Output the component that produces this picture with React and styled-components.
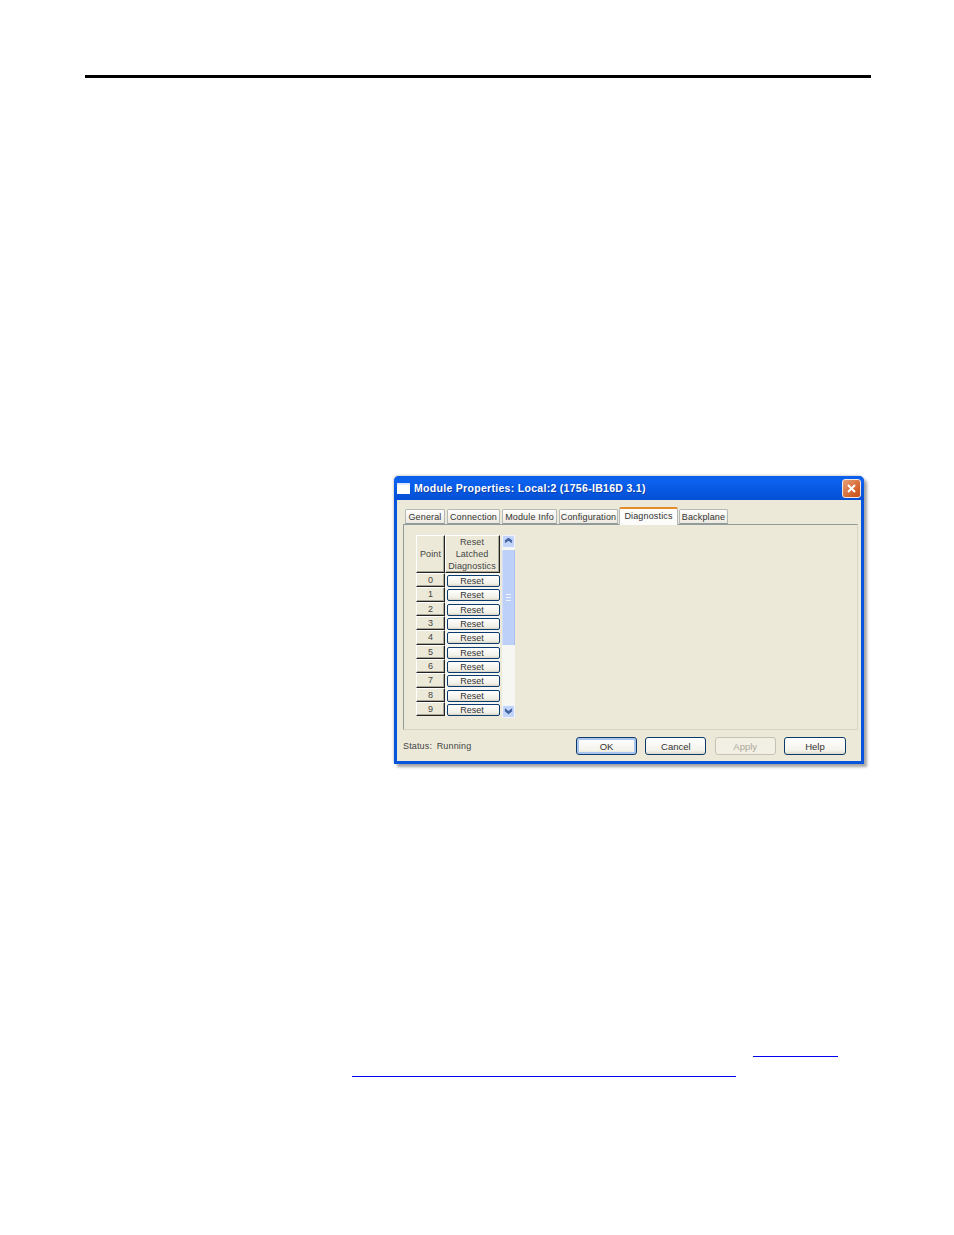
import React from "react";
import styled, { createGlobalStyle } from "styled-components";

const Global = createGlobalStyle`
  html, body { margin: 0; padding: 0; background: #fff; }
  body { font-family: "Liberation Sans", Arial, sans-serif; }
`;

const Page = styled.div`
  width: 954px;
  height: 1235px;
  box-sizing: border-box;
  padding-top: 75px;
  overflow: hidden;
`;

const TopRule = styled.div`
  height: 3px;
  margin: 0 83px 0 85px;
  background: #000;
`;

const Dialog = styled.div`
  width: 470px;
  height: 288px;
  margin: 398px 0 0 394px;
  box-sizing: border-box;
  display: flex;
  flex-direction: column;
  border-radius: 5px 5px 0 0;
  background: #0855dd;
  box-shadow: 3px 3px 3px rgba(90, 90, 90, 0.55), -1px -1px 2px rgba(150, 150, 150, 0.4);
  padding: 0 3px 3px;
`;

const TitleBar = styled.div`
  height: 24px;
  flex: none;
  display: flex;
  align-items: center;
  margin: 0 -3px;
  padding-left: 3px;
  padding-right: 3px;
  border-radius: 5px 5px 0 0;
  background: linear-gradient(#0a5fe8 0%, #0b62ef 20%, #0757e0 60%, #0450d6 100%);
`;

const TitleIcon = styled.div`
  width: 13px;
  height: 9px;
  background: #fff;
  border-top: 2px solid #dfe8ff;
  margin-right: 4px;
`;

const TitleText = styled.div`
  flex: 1;
  color: #fff;
  font: bold 10.5px "Liberation Sans", sans-serif;
  letter-spacing: 0.3px;
  text-shadow: 1px 1px 0 #0a3fa8;
  white-space: nowrap;
`;

const CloseButton = styled.div`
  width: 17px;
  height: 17px;
  border: 1px solid #f4e6df;
  border-radius: 3px;
  background: linear-gradient(135deg, #e8a078, #d2622c 70%, #c4521f);
  display: flex;
  align-items: center;
  justify-content: center;
`;

const Body = styled.div`
  flex: 1;
  min-height: 0;
  display: flex;
  flex-direction: column;
  background: #ece9d8;
  padding: 7px 3px 0 6px;
`;

const Tabs = styled.div`
  display: flex;
  align-items: flex-end;
  height: 17px;
  padding-left: 2px;
  position: relative;
  z-index: 1;
`;

const Tab = styled.div`
  height: ${(p) => (p.$active ? "18px" : "15px")};
  width: ${(p) => p.$width}px;
  box-sizing: border-box;
  margin-left: ${(p) => (p.$active ? "-1px" : "0")};
  margin-right: ${(p) => (p.$active ? 1 : 2)}px;
  margin-bottom: ${(p) => (p.$active ? "-1px" : "0")};
  padding-bottom: ${(p) => (p.$active ? "2px" : "0")};
  display: flex;
  align-items: center;
  justify-content: center;
  color: #333;
  font-size: 9px;
  letter-spacing: 0.15px;
  white-space: nowrap;
  background: ${(p) => (p.$active ? "#fcfcfa" : "linear-gradient(#fff, #ece9df)")};
  border: 1px solid #b4b9b6;
  border-bottom: ${(p) => (p.$active ? "none" : "1px solid #919b9c")};
  border-top: ${(p) => (p.$active ? "2px solid #e68b2c" : "1px solid #b4b9b6")};
  border-radius: 2px 2px 0 0;
`;

const Pane = styled.div`
  height: 206px;
  flex: none;
  box-sizing: border-box;
  border: 1px solid #d8d5c6;
  border-top: 1px solid #919b9c;
  border-left-color: #919b9c;
  padding: 10px 0 0 12px;
  display: flex;
  gap: 2px;
  align-items: flex-start;
`;

const Grid = styled.div`
  display: grid;
  grid-template-columns: 29px 55px;
  grid-template-rows: 38px repeat(10, 14.33px);
`;

const HeadCell = styled.div`
  box-sizing: border-box;
  display: flex;
  align-items: center;
  justify-content: center;
  text-align: center;
  background: #ece9d8;
  color: #444;
  font-size: 9px;
  line-height: 12px;
  letter-spacing: 0.1px;
  padding-right: ${(p) => p.$shift || 0}px;
  border-top: 1px solid #fff;
  border-left: 1px solid #fff;
  border-right: 1px solid #222;
  border-bottom: 1px solid #222;
  box-shadow: inset -1px -1px 0 #aca899;
`;

const PortCell = styled(HeadCell)`
  line-height: 10px;
`;

const ResetCell = styled.div`
  background: #f5f5f2;
  padding: 2px 0 0 2px;
  box-sizing: border-box;
`;

const ResetButton = styled.div`
  width: 53px;
  height: 12px;
  box-sizing: border-box;
  border: 1px solid #0a3a6e;
  border-radius: 2px;
  background: linear-gradient(#fff, #f0efe6 80%, #d6d2c2);
  color: #333;
  font-size: 9px;
  line-height: 10px;
  text-align: center;
  padding-right: 3px;
`;

const Scroll = styled.div`
  width: 13px;
  height: 183px;
  display: flex;
  flex-direction: column;
  background: #f6f6f2;
`;

const ScrollButton = styled.div`
  height: 13px;
  flex: none;
  box-sizing: border-box;
  border: 1px solid #eef3fd;
  border-radius: 2px;
  background: #c3d4fb;
  display: flex;
  align-items: center;
  justify-content: center;
`;

const Thumb = styled.div`
  height: 95px;
  margin-top: 2px;
  flex: none;
  background: #bcd0f8;
  display: flex;
  align-items: center;
  justify-content: center;
  border-left: 1px solid #d2dffc;
  border-right: 1px solid #a8c0f2;
  box-sizing: border-box;
`;

const Grip = styled.div`
  width: 5px;
  height: 7px;
  border-top: 1px solid #eef3fe;
  border-bottom: 1px solid #eef3fe;
  box-sizing: border-box;
  background: linear-gradient(transparent 40%, #eef3fe 40%, #eef3fe 60%, transparent 60%);
`;

const Track = styled.div`
  flex: 1;
`;

const Footer = styled.div`
  flex: 1;
  display: flex;
  align-items: center;
  padding: 0 12px 0 0;
`;

const Status = styled.div`
  flex: 1;
  color: #444;
  font-size: 9px;
  letter-spacing: 0.15px;
  padding-top: 1px;
  word-spacing: 2px;
`;

const Buttons = styled.div`
  display: flex;
  gap: 8.3px;
  margin-top: 1px;
`;

const Button = styled.div`
  width: ${(p) => p.$width || 61}px;
  height: 18px;
  box-sizing: border-box;
  display: flex;
  align-items: center;
  justify-content: center;
  font-size: 9.5px;
  border-radius: 3px;
  color: ${(p) => (p.$disabled ? "#aca899" : "#333")};
  border: 1px solid ${(p) => (p.$disabled ? "#c6c3b4" : "#0b3a6b")};
  background: ${(p) => (p.$disabled ? "#f2f0e5" : "linear-gradient(#fff, #f3f2ea 80%, #dcd8c8)")};
  box-shadow: ${(p) => (p.$default ? "inset 0 0 0 2px #a9c4ee" : "none")};
`;

const LinkLine = styled.div`
  height: 1px;
  background: #0000ee;
  width: ${(p) => p.$width}px;
  margin-left: ${(p) => p.$left}px;
  margin-top: ${(p) => p.$top}px;
`;

const Chevron = ({ up }) => (
  <svg width="9" height="8" viewBox="0 0 9 8">
    {[0, 3].map((o) => (
      <path
        key={o}
        d={up ? `M1 ${3 + o / 2}L4.5 ${0.5 + o / 2}L8 ${3 + o / 2}` : `M1 ${1 + o / 2}L4.5 ${4 + o / 2}L8 ${1 + o / 2}`}
        fill="none"
        stroke="#3a5a9a"
        strokeWidth="1.3"
      />
    ))}
  </svg>
);

const tabs = [
  ["General", 40],
  ["Connection", 53],
  ["Module Info", 55],
  ["Configuration", 59],
  ["Diagnostics", 59, true],
  ["Backplane", 49],
];

const App = () => (
  <Page>
    <Global />
    <TopRule />
    <Dialog>
      <TitleBar>
        <TitleIcon />
        <TitleText>Module Properties: Local:2 (1756-IB16D 3.1)</TitleText>
        <CloseButton>
          <svg width="11" height="11" viewBox="0 0 11 11">
            <path d="M2 2L9 9M9 2L2 9" stroke="#fff" strokeWidth="2" />
          </svg>
        </CloseButton>
      </TitleBar>
      <Body>
        <Tabs>
          {tabs.map(([label, width, active]) => (
            <Tab key={label} $width={width} $active={active}>
              {label}
            </Tab>
          ))}
        </Tabs>
        <Pane>
          <Grid>
            <HeadCell>Point</HeadCell>
            <HeadCell $shift={1}>
              Reset
              <br />
              Latched
              <br />
              Diagnostics
            </HeadCell>
            {[0, 1, 2, 3, 4, 5, 6, 7, 8, 9].map((n) => (
              <React.Fragment key={n}>
                <PortCell>{n}</PortCell>
                <ResetCell>
                  <ResetButton>Reset</ResetButton>
                </ResetCell>
              </React.Fragment>
            ))}
          </Grid>
          <Scroll>
            <ScrollButton>
              <Chevron up />
            </ScrollButton>
            <Thumb>
              <Grip />
            </Thumb>
            <Track />
            <ScrollButton>
              <Chevron />
            </ScrollButton>
          </Scroll>
        </Pane>
        <Footer>
          <Status>Status: Running</Status>
          <Buttons>
            <Button $default>OK</Button>
            <Button>Cancel</Button>
            <Button $disabled>Apply</Button>
            <Button $width={62}>Help</Button>
          </Buttons>
        </Footer>
      </Body>
    </Dialog>
    <LinkLine $left={753} $width={85} $top={292} />
    <LinkLine $left={352} $width={384} $top={19} />
  </Page>
);

export default App;
